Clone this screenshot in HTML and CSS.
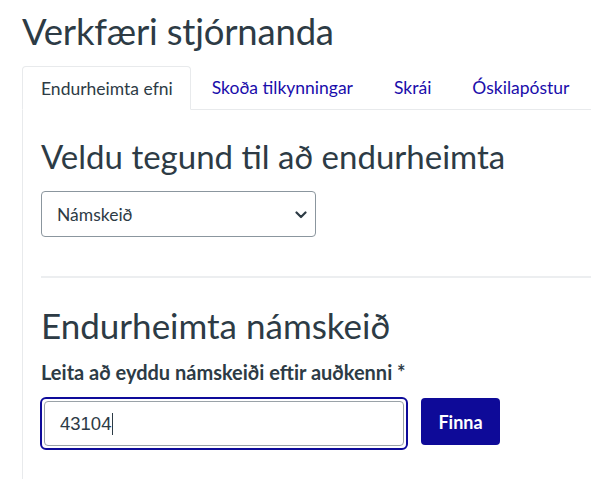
FILE: index.html
```html
<!DOCTYPE html>
<html lang="is">
<head>
<meta charset="utf-8">
<link rel="stylesheet" href="styles.css">
</head>
<body>
<div class="page">
  <h1 class="title">Verkfæri stjórnanda</h1>
  <div class="tabs">
    <div class="tab active">Endurheimta efni</div>
    <a class="tab" href="#">Skoða tilkynningar</a>
    <a class="tab" href="#">Skrái</a>
    <a class="tab" href="#">Óskilapóstur</a>
    <div class="tab-fill"></div>
  </div>
  <div class="panel">
    <h2 class="section-title first">Veldu tegund til að endurheimta</h2>
    <div class="select">
      <span>Námskeið</span>
      <svg class="chev" width="12" height="8" viewBox="0 0 12 8"><path d="M1.5 1.5 L6 6 L10.5 1.5" fill="none" stroke="#2d3b45" stroke-width="2.2" stroke-linecap="round" stroke-linejoin="round"/></svg>
    </div>
    <div class="divider"></div>
    <h2 class="section-title second">Endurheimta námskeið</h2>
    <div class="label">Leita að eyddu námskeiði eftir auðkenni *</div>
    <div class="row">
      <div class="input-ring"><div class="input"><span>43104</span><span class="caret"></span></div></div>
      <button class="btn">Finna</button>
    </div>
  </div>
</div>
</body>
</html>
```
FILE: styles.css
```css
html, body { margin: 0; padding: 0; background: #fff; }
body { font-family: Lato, "Open Sans", sans-serif; color: #2d3b45; }
.page { padding-left: 22px; }
.title { margin: 0; padding-top: 9px; font-size: 36.5px; font-weight: 400; line-height: 44px; height: 57px; letter-spacing: -0.2px; }
.tabs { display: flex; align-items: stretch; height: 44px; }
.tab { display: flex; align-items: center; padding: 0 20px 0 21px; font-size: 17.5px; color: #1a0dab; text-decoration: none; border-bottom: 1px solid #e8eaec; }
.tab.active { color: #2d3b45; border: 1px solid #e8eaec; border-bottom: 1px solid #fff; border-radius: 4px 4px 0 0; padding: 0 17px 0 18px; }
.tab-fill { flex: 1; border-bottom: 1px solid #e8eaec; }
.panel { border-left: 1px solid #e8eaec; padding-left: 18px; padding-top: 26px; padding-bottom: 30px; }
.section-title { margin: 0; font-weight: 400; line-height: 40px; }
.first { font-size: 33px; }
.select { margin-top: 15px; width: 275px; height: 46px; box-sizing: border-box; border: 1px solid #8b969e; border-radius: 4px; display: flex; align-items: center; justify-content: space-between; padding: 0 8px 0 15px; font-size: 17.5px; }
.chev { margin-top: 1px; }
.divider { height: 2px; background: #eceef0; margin-top: 39px; }
.second { margin-top: 27px; font-size: 35px; }
.label { margin-top: 15px; font-size: 20px; font-weight: 700; line-height: 24px; }
.row { display: flex; align-items: flex-start; gap: 13px; margin-top: 13px; }
.input-ring { border: 2px solid #0e0b9a; border-radius: 6px; padding: 2px; margin-left: -1px; }
.input { width: 360px; height: 45px; box-sizing: border-box; border: 1px solid #9aa2a8; border-radius: 4px; display: flex; align-items: center; padding-left: 15px; font-family: "Liberation Sans", Arial, sans-serif; font-size: 18.5px; color: #2d3b45; }
.caret { display: inline-block; width: 1px; height: 22px; background: #2d3b45; margin-left: 1px; }
.btn { margin-top: 1px; height: 47px; width: 79px; background: #0e0a98; color: #fff; border: none; border-radius: 4px; font-family: Lato, sans-serif; font-size: 18px; font-weight: 700; padding: 0; }
```
